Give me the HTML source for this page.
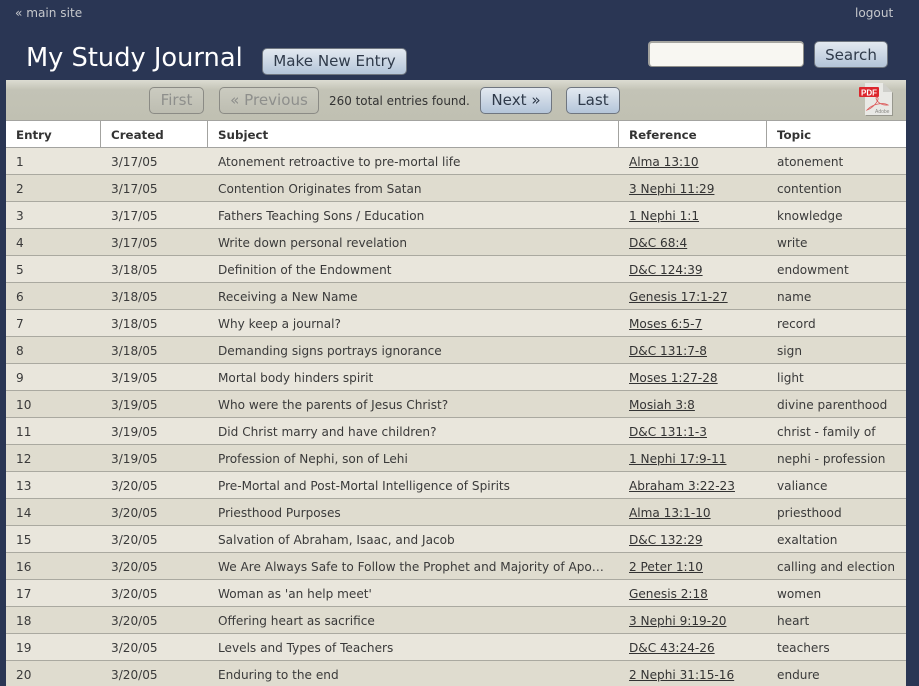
<!DOCTYPE html>
<html><head><meta charset="utf-8">
<style>
html,body{margin:0;padding:0;width:919px;height:686px;overflow:hidden;background:#2a3654;}
body{position:relative;font-family:"DejaVu Sans",Verdana,sans-serif;color:#333;}
.a{position:absolute;white-space:nowrap;}
.btn{position:absolute;box-sizing:border-box;height:27px;border:1px solid #6f7680;border-radius:5px;background:linear-gradient(#e3e9f0,#b4c5d9);color:#2f3a4a;font-size:15.1px;line-height:25px;text-align:center;white-space:nowrap;}
.dis{border-color:#8b8b85;background:linear-gradient(#cbcbc0,#bdbdb1);color:#8e8f8c;}
#bar{position:absolute;left:6px;top:80px;width:900px;height:40px;background:linear-gradient(#dcdcd2 0,#c3c3b6 10px,#c0c0b2 100%);}
#tbl{position:absolute;left:6px;top:120px;width:900px;border-collapse:separate;border-spacing:0;table-layout:fixed;font-size:12.1px;}
#tbl th{height:24px;padding:2px 0 0 10px;background:#fff;text-align:left;font-weight:bold;font-size:11.85px;color:#333;border-top:1px solid #a3a3a0;border-bottom:1px solid #a3a3a0;border-left:1px solid #a3a3a0;}
#tbl th:first-child{border-left:0;}
#tbl td{height:24px;padding:2px 0 0 11px;border-bottom:1px solid #aaa9a0;white-space:nowrap;overflow:hidden;color:#3a3a3a;}
#tbl td:first-child{padding-left:10px;}
#tbl tr:nth-child(odd) td{background:#e9e6dc;}
#tbl tr:nth-child(even) td{background:#dfdccf;}
#tbl thead tr th{background:#fff;}
#tbl a{color:#333;text-decoration:underline;}
</style></head><body>
<div class="a" style="left:15px;top:6px;font-size:12.1px;color:#c6c8cc;">« main site</div>
<div class="a" style="left:855px;top:6px;font-size:12.1px;color:#c6c8cc;">logout</div>
<div class="a" style="left:26px;top:41px;font-size:25.7px;line-height:34px;color:#fff;">My Study Journal</div>
<div class="btn" style="left:262px;top:48px;width:145px;">Make New Entry</div>
<div class="a" style="left:648px;top:41px;width:156px;height:26px;box-sizing:border-box;background:#f8f7f2;border:1px solid #8f8f8a;border-left:2px solid #a0a09c;border-top:2px solid #a5a5a0;border-radius:4px;"></div>
<div class="btn" style="left:814px;top:41px;width:74px;padding-top:1px;">Search</div>
<div id="bar"></div>
<div class="btn dis" style="left:149px;top:87px;width:55px;">First</div>
<div class="btn dis" style="left:219px;top:87px;width:100px;">« Previous</div>
<div class="a" style="left:329px;top:94px;font-size:11.95px;color:#333;">260 total entries found.</div>
<div class="btn" style="left:480px;top:87px;width:72px;">Next »</div>
<div class="btn" style="left:566px;top:87px;width:54px;">Last</div>
<svg class="a" style="left:858px;top:83px;" width="36" height="34" viewBox="0 0 36 34">
<path d="M8 1H26L35 10V33H8Z" fill="#77776f" opacity=".55"/>
<path d="M7 0H25L34 9V32H7Z" fill="#e9e9e5"/>
<path d="M25 0L34 9H25Z" fill="#cfcfca"/>
<rect x="1" y="4" width="20" height="10" rx="1" fill="#dc272d"/>
<text x="3" y="12.3" font-family="Liberation Sans,sans-serif" font-size="8" font-weight="bold" fill="#fff">PDF</text>
<path d="M9 27C15 25 23 16 19 14C16 14 20 23 30 22C25 19 14 21 9 27Z" fill="none" stroke="#dc5a5a" stroke-width=".8"/>
<text x="17" y="30" font-family="Liberation Sans,sans-serif" font-size="5" fill="#8b8b86">Adobe</text>
</svg>
<table id="tbl">
<colgroup><col style="width:94px"><col style="width:107px"><col style="width:411px"><col style="width:148px"><col style="width:140px"></colgroup>
<thead><tr><th>Entry</th><th>Created</th><th>Subject</th><th>Reference</th><th>Topic</th></tr></thead>
<tbody>
<tr><td>1</td><td>3/17/05</td><td>Atonement retroactive to pre-mortal life</td><td><a>Alma 13:10</a></td><td>atonement</td></tr>
<tr><td>2</td><td>3/17/05</td><td>Contention Originates from Satan</td><td><a>3 Nephi 11:29</a></td><td>contention</td></tr>
<tr><td>3</td><td>3/17/05</td><td>Fathers Teaching Sons / Education</td><td><a>1 Nephi 1:1</a></td><td>knowledge</td></tr>
<tr><td>4</td><td>3/17/05</td><td>Write down personal revelation</td><td><a>D&amp;C 68:4</a></td><td>write</td></tr>
<tr><td>5</td><td>3/18/05</td><td>Definition of the Endowment</td><td><a>D&amp;C 124:39</a></td><td>endowment</td></tr>
<tr><td>6</td><td>3/18/05</td><td>Receiving a New Name</td><td><a>Genesis 17:1-27</a></td><td>name</td></tr>
<tr><td>7</td><td>3/18/05</td><td>Why keep a journal?</td><td><a>Moses 6:5-7</a></td><td>record</td></tr>
<tr><td>8</td><td>3/18/05</td><td>Demanding signs portrays ignorance</td><td><a>D&amp;C 131:7-8</a></td><td>sign</td></tr>
<tr><td>9</td><td>3/19/05</td><td>Mortal body hinders spirit</td><td><a>Moses 1:27-28</a></td><td>light</td></tr>
<tr><td>10</td><td>3/19/05</td><td>Who were the parents of Jesus Christ?</td><td><a>Mosiah 3:8</a></td><td>divine parenthood</td></tr>
<tr><td>11</td><td>3/19/05</td><td>Did Christ marry and have children?</td><td><a>D&amp;C 131:1-3</a></td><td>christ - family of</td></tr>
<tr><td>12</td><td>3/19/05</td><td>Profession of Nephi, son of Lehi</td><td><a>1 Nephi 17:9-11</a></td><td>nephi - profession</td></tr>
<tr><td>13</td><td>3/20/05</td><td>Pre-Mortal and Post-Mortal Intelligence of Spirits</td><td><a>Abraham 3:22-23</a></td><td>valiance</td></tr>
<tr><td>14</td><td>3/20/05</td><td>Priesthood Purposes</td><td><a>Alma 13:1-10</a></td><td>priesthood</td></tr>
<tr><td>15</td><td>3/20/05</td><td>Salvation of Abraham, Isaac, and Jacob</td><td><a>D&amp;C 132:29</a></td><td>exaltation</td></tr>
<tr><td>16</td><td>3/20/05</td><td>We Are Always Safe to Follow the Prophet and Majority of Apo…</td><td><a>2 Peter 1:10</a></td><td>calling and election</td></tr>
<tr><td>17</td><td>3/20/05</td><td>Woman as 'an help meet'</td><td><a>Genesis 2:18</a></td><td>women</td></tr>
<tr><td>18</td><td>3/20/05</td><td>Offering heart as sacrifice</td><td><a>3 Nephi 9:19-20</a></td><td>heart</td></tr>
<tr><td>19</td><td>3/20/05</td><td>Levels and Types of Teachers</td><td><a>D&amp;C 43:24-26</a></td><td>teachers</td></tr>
<tr><td>20</td><td>3/20/05</td><td>Enduring to the end</td><td><a>2 Nephi 31:15-16</a></td><td>endure</td></tr>
</tbody></table>
</body></html>
